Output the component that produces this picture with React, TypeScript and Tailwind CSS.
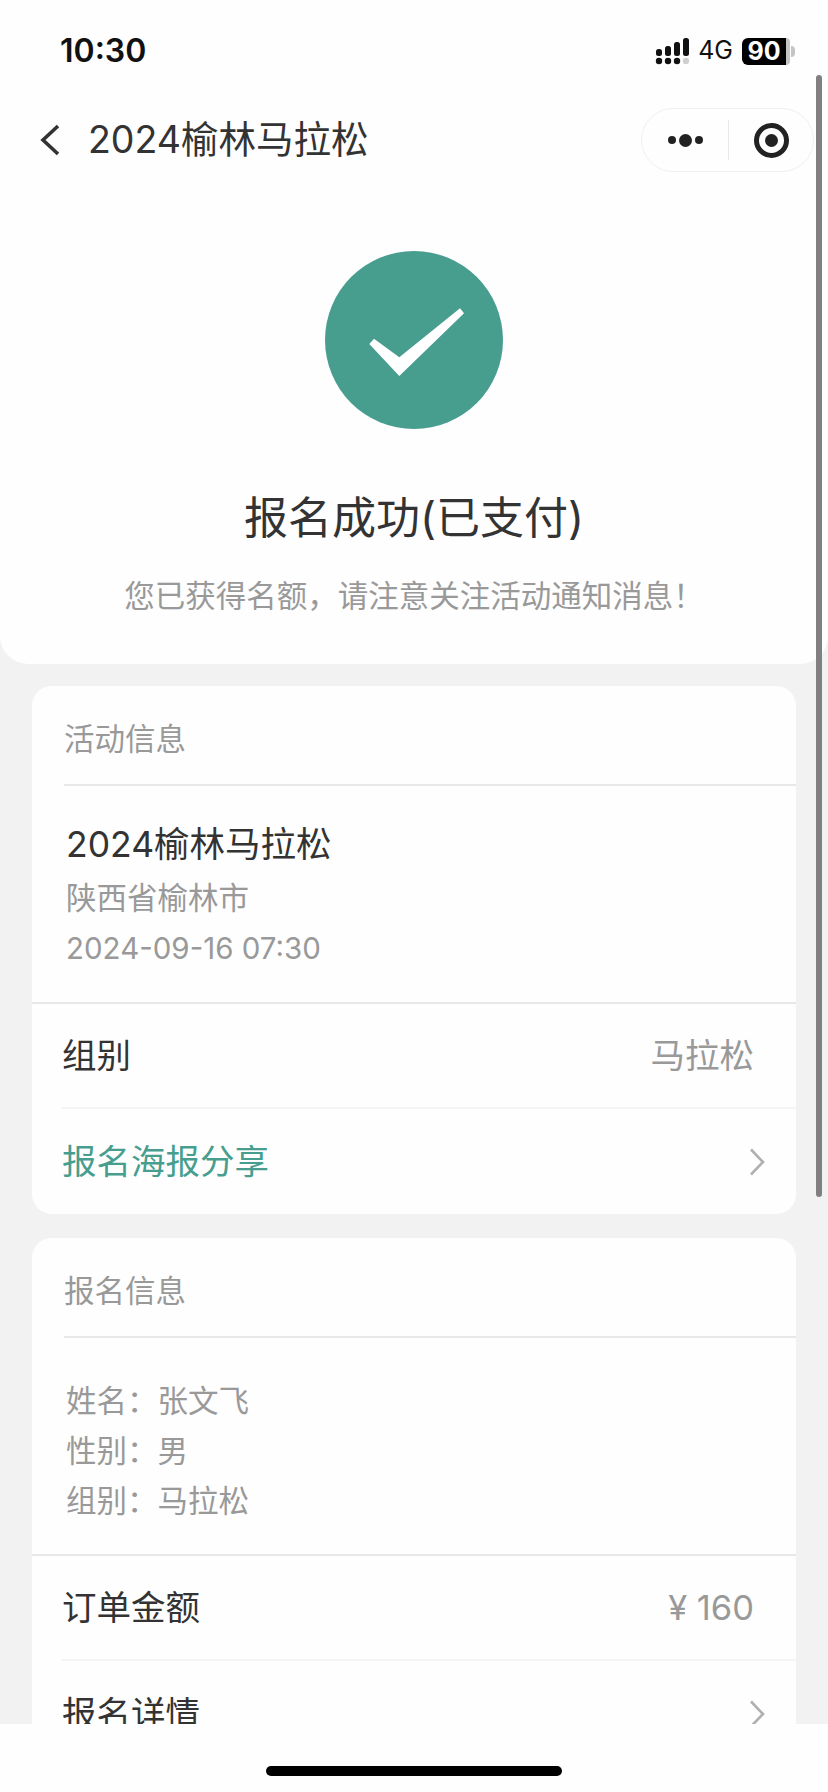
import React from "react";

const FONT = "font-['Inter','Noto_Sans_CJK_SC',sans-serif]";

const Chevron = () => (
  <svg className="mr-[-11px]" width="16" height="28" viewBox="0 0 16 28" fill="none" stroke="#b0b0b0" strokeWidth="2.6">
    <path d="M2 1.5 L14 14 L2 26.5" />
  </svg>
);

const SignalIcon = () => (
  <svg width="34" height="27" viewBox="0 0 34 27" fill="#111">
    <circle cx="4" cy="23" r="3.2" />
    <circle cx="13" cy="23" r="3.2" />
    <circle cx="22" cy="23" r="3.2" />
    <circle cx="31" cy="23" r="3.2" fill="#cfcfcf" />
    <rect x="1" y="11" width="6" height="7" rx="2.5" />
    <rect x="10" y="8" width="6" height="10" rx="2.5" />
    <rect x="19" y="4" width="6" height="14" rx="2.5" />
    <rect x="28" y="0" width="6" height="18" rx="2.5" />
  </svg>
);

const Battery = () => (
  <div className="flex items-center">
    <div className="flex h-[27px] w-[44px] items-center justify-center rounded-l-[6px] bg-black text-[25px] leading-[27px] font-bold text-white">
      90
    </div>
    <div className="h-[27px] w-[4px] rounded-r-[4px] bg-[#c4c4c4]" />
    <div className="ml-[1px] h-[11px] w-[4px] rounded-r-full bg-[#c4c4c4]" />
  </div>
);

const CardTitle = ({ title }: { title: string }) => (
  <div className="ml-[32px] flex h-[100px] items-center border-b-2 border-[#e8e8e8] pt-[7px] text-[30.5px] text-[#999999]">
    {title}
  </div>
);

const Row = ({ children, line }: { children: React.ReactNode; line?: boolean }) => (
  <div
    className={`ml-[30px] flex h-[105px] items-center justify-between pr-[42px] text-[34.5px] ${
      line ? "border-b-2 border-[#f4f4f4]" : ""
    }`}
  >
    {children}
  </div>
);

export default function App() {
  return (
    <div className={`relative h-[1792px] w-[828px] overflow-hidden bg-[#f2f2f2] text-[#333333] ${FONT}`}>
      {/* top area */}
      <div className="flex h-[664px] flex-col rounded-b-[28px] bg-[#fefefe]">
        <div className="flex h-[100px] items-center justify-between pt-[2px] pr-[33px] pl-[60px]">
          <span className="text-[32px] font-semibold text-[#111]">10:30</span>
          <div className="flex items-center gap-[9px]">
            <SignalIcon />
            <span className="text-[25px] text-[#111]">4G</span>
            <Battery />
          </div>
        </div>

        <div className="flex h-[80px] items-center justify-between pr-[14px] pl-[39px]">
          <div className="flex items-center gap-[27px]">
            <svg width="22" height="32" viewBox="0 0 22 32" fill="none" stroke="#333" strokeWidth="3.6">
              <path d="M19 2 L4 16 L19 30" />
            </svg>
            <span className="text-[37.5px]">2024榆林马拉松</span>
          </div>
          <div className="flex h-[64px] w-[173px] items-center rounded-full border border-[#f0f0f0]">
            <div className="flex w-[86px] items-center justify-center gap-[3px]">
              <span className="h-[8px] w-[8px] rounded-full bg-[#222]" />
              <span className="h-[13px] w-[13px] rounded-full bg-[#222]" />
              <span className="h-[8px] w-[8px] rounded-full bg-[#222]" />
            </div>
            <div className="h-[40px] w-px bg-[#e8e8e8]" />
            <div className="flex flex-1 items-center justify-center">
              <div className="flex h-[35px] w-[35px] items-center justify-center rounded-full border-[5px] border-[#222]">
                <span className="h-[13px] w-[13px] rounded-full bg-[#222]" />
              </div>
            </div>
          </div>
        </div>

        <div className="flex flex-col items-center">
          <svg className="mt-[71px]" width="178" height="178" viewBox="0 0 178 178">
            <circle cx="89" cy="89" r="89" fill="#479e8f" />
            <path d="M49 87.7 L74.3 106.3 L135 57.3 L139 62.3 L74.3 125 L44.3 93 Z" fill="#fff" />
          </svg>
          <div className="mt-[56px] text-[44px] leading-[66px]">报名成功(已支付)</div>
          <div className="mt-[23px] text-[30.5px] leading-[44px] text-[#999999]">
            您已获得名额，请注意关注活动通知消息！
          </div>
        </div>
      </div>

      {/* activity card */}
      <div className="mx-[32px] mt-[22px] rounded-[20px] bg-[#fefefe]">
        <CardTitle title="活动信息" />
        <div className="flex h-[218px] flex-col border-b-2 border-[#e8e8e8] pt-[31px] pl-[34px] text-[30.5px] text-[#999999]">
          <div className="text-[35.5px] leading-[56px] text-[#333333]">2024榆林马拉松</div>
          <div className="leading-[50px]">陕西省榆林市</div>
          <div className="text-[29.5px] leading-[50px]">2024-09-16 07:30</div>
        </div>
        <Row line>
          <span>组别</span>
          <span className="text-[#999999]">马拉松</span>
        </Row>
        <Row>
          <span className="text-[#479e8f]">报名海报分享</span>
          <Chevron />
        </Row>
      </div>

      {/* signup card */}
      <div className="mx-[32px] mt-[24px] rounded-[20px] bg-[#fefefe]">
        <CardTitle title="报名信息" />
        <div className="flex h-[218px] flex-col justify-center border-b-2 border-[#e8e8e8] pt-[9px] pl-[34px] text-[30.5px] leading-[50px] text-[#999999]">
          <div>姓名：张文飞</div>
          <div>性别：男</div>
          <div>组别：马拉松</div>
        </div>
        <Row line>
          <span>订单金额</span>
          <span className="text-[#999999]">¥ 160</span>
        </Row>
        <Row>
          <span>报名详情</span>
          <Chevron />
        </Row>
      </div>

      {/* scrollbar */}
      <div className="absolute top-[75px] right-[6px] h-[1122px] w-[6px] rounded-full bg-[#808080]" />

      {/* bottom safe area */}
      <div className="absolute right-0 bottom-0 left-0 flex h-[68px] justify-center bg-[#fefefe] pt-[42px]">
        <div className="h-[10px] w-[296px] rounded-full bg-black" />
      </div>
    </div>
  );
}
